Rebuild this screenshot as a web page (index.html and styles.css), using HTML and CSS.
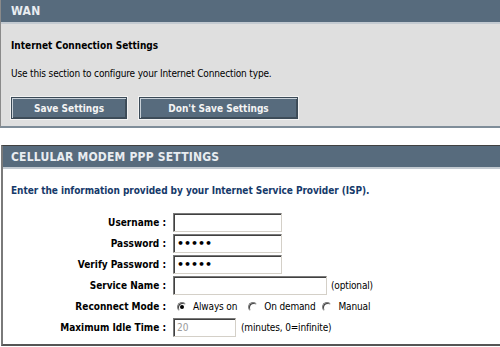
FILE: index.html
```html
<!DOCTYPE html>
<html>
<head>
<meta charset="utf-8">
<link rel="stylesheet" href="styles.css">
</head>
<body>
<div class="box box-gray">
  <div class="hdr">WAN</div>
  <div class="body gray">
    <div class="subtitle">Internet Connection Settings</div>
    <div class="desc">Use this section to configure your Internet Connection type.</div>
    <div class="buttons">
      <button class="btn btn-save">Save Settings</button>
      <button class="btn btn-dont">Don't Save Settings</button>
    </div>
  </div>
</div>

<div class="box box-white">
  <div class="hdr hdr2">CELLULAR MODEM PPP SETTINGS</div>
  <div class="body white">
    <div class="intro">Enter the information provided by your Internet Service Provider (ISP).</div>
    <div class="form">
      <div class="row"><span class="lbl">Username :</span><span class="fld"><input class="inp w108" type="text"></span></div>
      <div class="row"><span class="lbl">Password :</span><span class="fld"><input class="inp w108 pw" type="password" value="12345"></span></div>
      <div class="row"><span class="lbl">Verify Password :</span><span class="fld"><input class="inp w108 pw" type="password" value="12345"></span></div>
      <div class="row"><span class="lbl">Service Name :</span><span class="fld"><input class="inp w153" type="text"><span class="note">(optional)</span></span></div>
      <div class="row"><span class="lbl">Reconnect Mode :</span><span class="fld radios">
        <label class="opt opt1"><input class="rad" type="radio" name="rm" checked><span>Always on</span></label>
        <label class="opt opt2"><input class="rad" type="radio" name="rm"><span>On demand</span></label>
        <label class="opt opt3"><input class="rad" type="radio" name="rm"><span>Manual</span></label>
      </span></div>
      <div class="row"><span class="lbl">Maximum Idle Time :</span><span class="fld"><input class="inp w62 dis" type="text" value="20" disabled><span class="note note2">(minutes, 0=infinite)</span></span></div>
    </div>
  </div>
</div>
</body>
</html>
```

FILE: styles.css
```css
html, body {
  margin: 0;
  padding: 0;
  background: #ffffff;
  width: 500px;
  height: 347px;
  overflow: hidden;
}
body {
  font-family: "DejaVu Sans Condensed", "DejaVu Sans", sans-serif;
  font-size: 10px;
  color: #000;
}
.box {
  width: 520px;
}
.box-gray {
  border-left: 1px solid #8a8a8a;
  border-bottom: 2px solid #7f8d99;
}
.box-white {
  margin-top: 17px;
  margin-left: 1px;
  border-left: 2px solid #7a7a7a;
  border-bottom: 2px solid #555;
  border-top: 1px solid #404040;
}
.hdr {
  height: 22px;
  line-height: 23px;
  background: #576b7d;
  color: #e9edf1;
  font-weight: bold;
  font-size: 12px;
  padding-left: 10px;
  border-bottom: 2px solid #c3cad1;
  letter-spacing: 0.2px;
}
.hdr2 {
  height: 21px;
  line-height: 22px;
  padding-left: 8px;
}
.gray {
  box-sizing: border-box;
  background: #dfdfdf;
  padding: 12px 10px 0 10px;
  height: 102px;
}
.subtitle {
  font-weight: bold;
  height: 20px;
  line-height: 20px;
}
.desc {
  margin-top: 8px;
  height: 20px;
  line-height: 20px;
  letter-spacing: -0.15px;
}
.buttons {
  margin-top: 13px;
  display: flex;
  gap: 12px;
}
.btn {
  box-sizing: border-box;
  height: 22px;
  background: #576b7d;
  color: #f4f4f4;
  font-family: inherit;
  font-weight: bold;
  font-size: 10px;
  border: 1px solid #3b4a57;
  box-shadow: inset 1px 1px 0 #c9d1d8, inset -1px -1px 0 #3f4d59;
  outline: 1px solid #f2f2f2;
  padding: 0;
  margin: 0;
}
.btn-save { width: 116px; }
.btn-dont { width: 159px; }
.white {
  background: #fff;
  padding: 13px 10px 6px 8px;
}
.intro {
  font-weight: bold;
  color: #163a6a;
  height: 18px;
  line-height: 18px;
  letter-spacing: -0.05px;
}
.form {
  margin-top: 12px;
}
.row {
  display: flex;
  align-items: center;
  height: 21px;
}
.lbl {
  width: 155px;
  text-align: right;
  font-weight: bold;
  padding-right: 7px;
  white-space: nowrap;
}
.fld {
  display: flex;
  align-items: center;
  letter-spacing: -0.15px;
}
.inp {
  box-sizing: border-box;
  height: 19px;
  border: 1px solid;
  border-color: #7a7a7a #d4d0c8 #d4d0c8 #7a7a7a;
  box-shadow: inset 1px 1px 0 #404040;
  padding: 1px 3px;
  font-family: "DejaVu Sans Condensed", sans-serif;
  font-size: 10px;
  margin: 0;
  background: #fff;
  outline: none;
}
.w108 { width: 109px; }
.w153 { width: 154px; }
.w62 { width: 63px; }
.pw {
  font-family: "DejaVu Sans", sans-serif;
  font-size: 11px;
  font-weight: bold;
  letter-spacing: 0;
}
.dis { color: #9a9a9a; }
.note { margin-left: 4px; }
.note2 { margin-left: 5px; }
.opt {
  display: flex;
  align-items: center;
}
.rad {
  -webkit-appearance: none;
  appearance: none;
  box-sizing: border-box;
  width: 10px;
  height: 10px;
  margin: 0 6px 0 0;
  border-radius: 50%;
  border: 1px solid;
  border-color: #7a7a7a #ffffff #ffffff #7a7a7a;
  box-shadow: inset 1px 1px 0 #404040;
  background: #fff;
  position: relative;
}
.rad:checked::after {
  content: "";
  position: absolute;
  left: 2px;
  top: 2px;
  width: 4px;
  height: 4px;
  border-radius: 50%;
  background: #000;
}
.opt1 { margin-left: 4px; }
.opt2 { margin-left: 11px; }
.opt3 { margin-left: 7px; }
```
